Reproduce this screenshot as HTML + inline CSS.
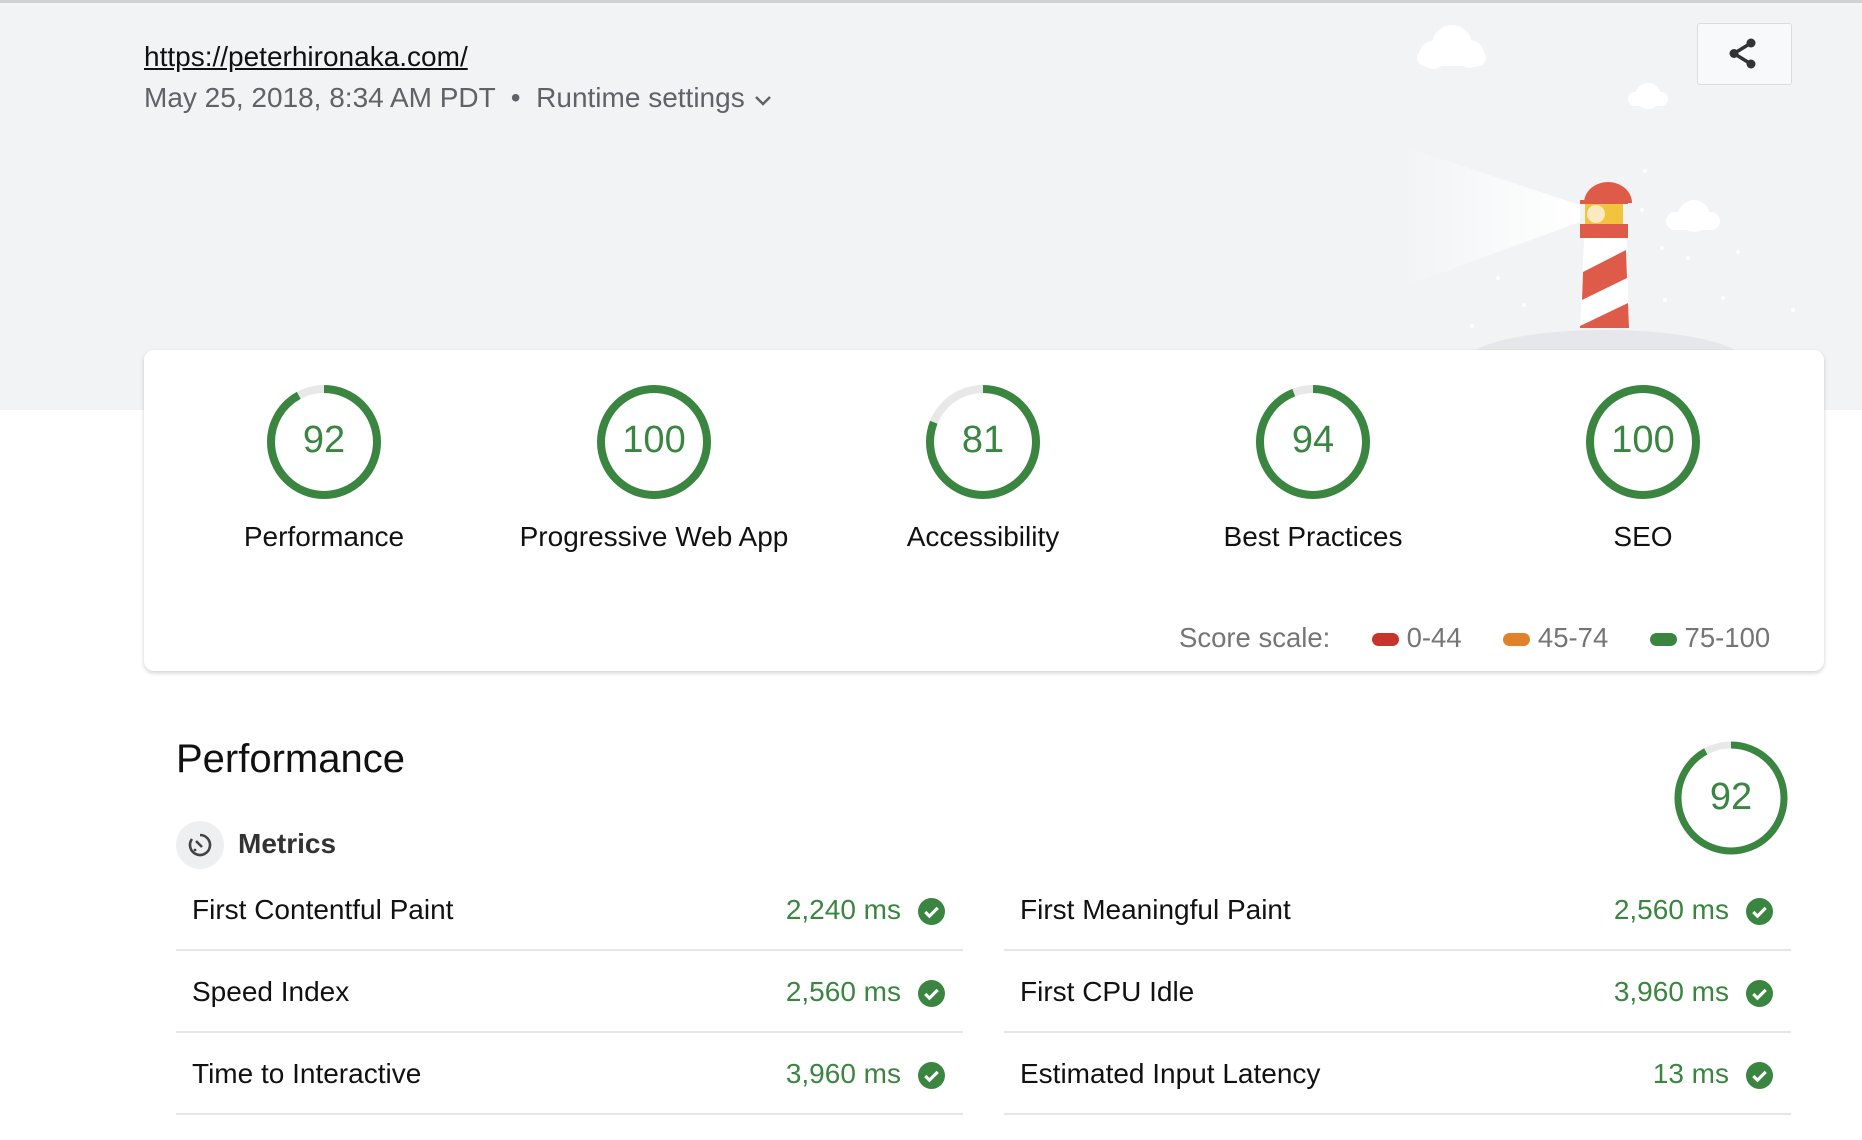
<!DOCTYPE html>
<html><head><meta charset="utf-8"><style>
*{margin:0;padding:0;box-sizing:border-box}
body{width:1862px;height:1140px;position:relative;overflow:hidden;background:#fff;font-family:"Liberation Sans",Arial,sans-serif;color:#212121}
.abs{position:absolute}
.hdr{left:0;top:0;width:1862px;height:410px;background:#f1f3f4;border-top:3px solid #cfd1d3}
.g{position:absolute;width:130px;height:130px}
.gl{position:absolute;width:330px;text-align:center;font-size:28px;color:#111}
.num{font-size:38px;fill:#3a8540;font-family:"Liberation Sans",Arial,sans-serif}
.row{position:absolute;height:80px;border-bottom:2px solid #e6e6e6}
.row .t{position:absolute;left:16px;top:23px;font-size:28px;color:#111}
.row .v{position:absolute;right:62px;top:23px;font-size:28px;color:#3a8540}
.row svg{position:absolute;right:18px;top:27px}
</style></head><body>
<div class="abs hdr"></div>
<div class="abs" style="left:144px;top:41px;font-size:28px;color:#111;text-decoration:underline">https://peterhironaka.com/</div>
<div class="abs" style="left:144px;top:82px;font-size:28px;color:#5f6368">May 25, 2018, 8:34 AM PDT &nbsp;•&nbsp; Runtime settings <svg width="22" height="14" viewBox="0 0 22 14" style="vertical-align:middle"><path d="M4 4l7 7 7-7" stroke="#5f6368" stroke-width="2.5" fill="none"/></svg></div>
<div class="abs" style="left:1697px;top:23px;width:95px;height:62px;background:#f8f9fa;border:1.5px solid #dadce0;border-radius:3px"></div>
<svg class="abs" style="left:1725px;top:36px" width="36" height="36" viewBox="0 0 36 36"><path d="M26 7L9 17.5 26 28" stroke="#333" stroke-width="3.5" fill="none"/><circle cx="26" cy="7" r="4.5" fill="#333"/><circle cx="9" cy="17.5" r="4.5" fill="#333"/><circle cx="26" cy="28" r="4.5" fill="#333"/></svg>
<svg class="abs" style="left:1380px;top:0" width="482" height="360" viewBox="0 0 482 360">
<defs><linearGradient id="bm" x1="0" x2="1"><stop offset="0" stop-color="#fff" stop-opacity="0.1"/><stop offset="1" stop-color="#fff" stop-opacity="1"/></linearGradient></defs>
<g fill="#fff"><circle cx="72" cy="45" r="20"/><circle cx="53" cy="55" r="14"/><circle cx="90" cy="54" r="14"/><rect x="37" y="50" width="69" height="16" rx="8"/>
<circle cx="268" cy="96" r="13"/><rect x="248" y="92" width="40" height="14" rx="7"/>
<circle cx="314" cy="216" r="16"/><rect x="286" y="212" width="54" height="18" rx="9"/></g>
<polygon points="28,148 200,205 200,222 28,285" fill="url(#bm)"/>
<ellipse cx="225" cy="362" rx="140" ry="32" fill="#e5e7ea"/>
<path d="M204 203a24 21 0 0 1 48 0z" fill="#de5b4a"/><rect x="200" y="200" width="48" height="4" fill="#de5b4a"/>
<rect x="205" y="204" width="38" height="20" fill="#f2c33d"/><circle cx="216" cy="214" r="9" fill="#fbe9c1"/>
<rect x="200" y="224" width="48" height="14" fill="#de5b4a"/>
<polygon points="204,238 247,238 249,328 200,328" fill="#fff"/>
<polygon points="246,250 247,278 202,300 203,272" fill="#de5b4a"/>
<polygon points="248,303 249,328 200,328 200,326" fill="#de5b4a"/>
<g fill="#fff"><circle cx="265" cy="171" r="2"/><circle cx="262" cy="210" r="2"/><circle cx="282" cy="248" r="2"/><circle cx="308" cy="258" r="2"/><circle cx="358" cy="252" r="2"/><circle cx="285" cy="300" r="2"/><circle cx="343" cy="298" r="2"/><circle cx="413" cy="310" r="2"/><circle cx="144" cy="305" r="2"/><circle cx="118" cy="278" r="2"/><circle cx="92" cy="326" r="2"/></g>
</svg>
<div class="abs" style="left:144px;top:350px;width:1680px;height:321px;background:#fff;border-radius:10px;box-shadow:0 2px 4px rgba(0,0,0,.18)"></div>
<svg class="g" style="left:259px;top:377px" viewBox="0 0 130 130"><circle cx="65" cy="65" r="53" fill="none" stroke="#e8e8e8" stroke-width="8"/><circle cx="65" cy="65" r="53" fill="none" stroke="#3a8540" stroke-width="8" stroke-dasharray="306.4 333" transform="rotate(-90 65 65)"/><text x="65" y="75" text-anchor="middle" class="num">92</text></svg>
<svg class="g" style="left:589px;top:377px" viewBox="0 0 130 130"><circle cx="65" cy="65" r="53" fill="none" stroke="#3a8540" stroke-width="8"/><text x="65" y="75" text-anchor="middle" class="num">100</text></svg>
<svg class="g" style="left:918px;top:377px" viewBox="0 0 130 130"><circle cx="65" cy="65" r="53" fill="none" stroke="#e8e8e8" stroke-width="8"/><circle cx="65" cy="65" r="53" fill="none" stroke="#3a8540" stroke-width="8" stroke-dasharray="269.7 333" transform="rotate(-90 65 65)"/><text x="65" y="75" text-anchor="middle" class="num">81</text></svg>
<svg class="g" style="left:1248px;top:377px" viewBox="0 0 130 130"><circle cx="65" cy="65" r="53" fill="none" stroke="#e8e8e8" stroke-width="8"/><circle cx="65" cy="65" r="53" fill="none" stroke="#3a8540" stroke-width="8" stroke-dasharray="313 333" transform="rotate(-90 65 65)"/><text x="65" y="75" text-anchor="middle" class="num">94</text></svg>
<svg class="g" style="left:1578px;top:377px" viewBox="0 0 130 130"><circle cx="65" cy="65" r="53" fill="none" stroke="#3a8540" stroke-width="8"/><text x="65" y="75" text-anchor="middle" class="num">100</text></svg>
<div class="gl" style="left:159px;top:521px">Performance</div>
<div class="gl" style="left:489px;top:521px">Progressive Web App</div>
<div class="gl" style="left:818px;top:521px">Accessibility</div>
<div class="gl" style="left:1148px;top:521px">Best Practices</div>
<div class="gl" style="left:1478px;top:521px">SEO</div>
<div class="abs" style="left:1179px;top:622px;font-size:27.5px;color:#757575;white-space:nowrap">Score scale:
<span style="display:inline-block;width:27px;height:13px;border-radius:7px;background:#c5352b;margin-left:34px;vertical-align:1px"></span> 0-44
<span style="display:inline-block;width:27px;height:13px;border-radius:7px;background:#e0822a;margin-left:34px;vertical-align:1px"></span> 45-74
<span style="display:inline-block;width:27px;height:13px;border-radius:7px;background:#3a8540;margin-left:34px;vertical-align:1px"></span> 75-100</div>
<div class="abs" style="left:176px;top:737px;font-size:40px;color:#111">Performance</div>
<svg class="abs" style="left:1671px;top:738px" width="120" height="120" viewBox="0 0 120 120"><circle cx="60" cy="60" r="53" fill="none" stroke="#e8e8e8" stroke-width="7"/><circle cx="60" cy="60" r="53" fill="none" stroke="#3a8540" stroke-width="7" stroke-dasharray="306.4 333" transform="rotate(-90 60 60)"/><text x="60" y="71" text-anchor="middle" class="num">92</text></svg>
<svg class="abs" style="left:176px;top:821px" width="48" height="48" viewBox="0 0 48 48"><circle cx="24" cy="24" r="24" fill="#eeeff0"/><path d="M24 14a10 10 0 1 1-8 4" stroke="#444" stroke-width="2.6" fill="none"/><path d="M20 20l6 6" stroke="#444" stroke-width="2.6"/><circle cx="19" cy="29" r="1.4" fill="#444"/></svg>
<div class="abs" style="left:238px;top:828px;font-size:28px;font-weight:bold;color:#333">Metrics</div>
<div class="row" style="left:176px;top:871px;width:787px"><div class="t">First Contentful Paint</div><div class="v">2,240 ms</div><svg width="27" height="27" viewBox="0 0 26 26"><circle cx="13" cy="13" r="13" fill="#3a8540"/><path d="M7 13.5l4 4 8-8" stroke="#fff" stroke-width="3" fill="none"/></svg></div>
<div class="row" style="left:176px;top:953px;width:787px"><div class="t">Speed Index</div><div class="v">2,560 ms</div><svg width="27" height="27" viewBox="0 0 26 26"><circle cx="13" cy="13" r="13" fill="#3a8540"/><path d="M7 13.5l4 4 8-8" stroke="#fff" stroke-width="3" fill="none"/></svg></div>
<div class="row" style="left:176px;top:1035px;width:787px"><div class="t">Time to Interactive</div><div class="v">3,960 ms</div><svg width="27" height="27" viewBox="0 0 26 26"><circle cx="13" cy="13" r="13" fill="#3a8540"/><path d="M7 13.5l4 4 8-8" stroke="#fff" stroke-width="3" fill="none"/></svg></div>
<div class="row" style="left:1004px;top:871px;width:787px"><div class="t">First Meaningful Paint</div><div class="v">2,560 ms</div><svg width="27" height="27" viewBox="0 0 26 26"><circle cx="13" cy="13" r="13" fill="#3a8540"/><path d="M7 13.5l4 4 8-8" stroke="#fff" stroke-width="3" fill="none"/></svg></div>
<div class="row" style="left:1004px;top:953px;width:787px"><div class="t">First CPU Idle</div><div class="v">3,960 ms</div><svg width="27" height="27" viewBox="0 0 26 26"><circle cx="13" cy="13" r="13" fill="#3a8540"/><path d="M7 13.5l4 4 8-8" stroke="#fff" stroke-width="3" fill="none"/></svg></div>
<div class="row" style="left:1004px;top:1035px;width:787px"><div class="t">Estimated Input Latency</div><div class="v">13 ms</div><svg width="27" height="27" viewBox="0 0 26 26"><circle cx="13" cy="13" r="13" fill="#3a8540"/><path d="M7 13.5l4 4 8-8" stroke="#fff" stroke-width="3" fill="none"/></svg></div>
</body></html>
